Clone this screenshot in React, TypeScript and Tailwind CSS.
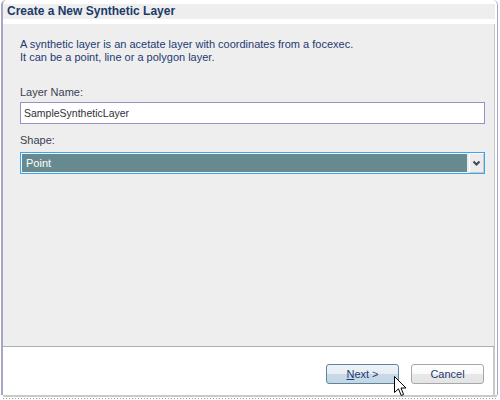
export default function App() {
  return (
    <div className="relative w-[500px] h-[400px] bg-white font-['Liberation_Sans',Arial,sans-serif] text-[11px] leading-[13px] overflow-hidden">
      {/* window frame */}
      <div className="ml-[1px] w-[497px] h-[395px] border-l-2 border-r border-[#a6a6c6] rounded-tl-[5px] rounded-tr-[5px] flex flex-col">
        <div className="h-[4px] shrink-0" />
        {/* title */}
        <div className="h-[15px] shrink-0 mr-[2px] bg-[#eeeeee] pl-[4px] flex items-center">
          <span className="font-bold text-[12px] leading-[15px] text-[#1c3a68]">Create a New Synthetic Layer</span>
        </div>
        <div className="h-[5px] shrink-0" />
        {/* panel */}
        <div className="h-[323px] shrink-0 mr-[2px] bg-[#eeeeee] border-b border-r border-[#c4c8c8] border-b-[#a8b0b0] pl-[17px] pr-[9px] pt-[14px] flex flex-col">
          <p className="text-[#1e3a72]">A synthetic layer is an acetate layer with coordinates from a focexec.</p>
          <p className="text-[#1e3a72]">It can be a point, line or a polygon layer.</p>

          <label className="mt-[22px] text-[#3c4050]">Layer Name:</label>
          <div className="mt-[3px] h-[22px] w-[465px] border border-[#9490c8] bg-white pl-[3px] flex items-center text-[#303038] text-[10.5px]">
            SampleSyntheticLayer
          </div>

          <label className="mt-[10px] text-[#3c4050]">Shape:</label>
          <div className="mt-[5px] h-[22px] w-[465px] border border-[#38a8ea] flex">
            <div className="flex-1 border border-[#f4f8fa] border-r-0 bg-[#678a90] pl-[4px] flex items-center text-white">
              Point
            </div>
            <div className="w-[2px] bg-[#e8ecee]" />
            <div className="w-[15px] bg-[#ececec] border border-[#ffffff] border-r-[#c8c8c8] border-b-[#c8c8c8] flex items-center justify-center">
              <svg width="9" height="7" viewBox="0 0 9 7">
                <path d="M1.5 1.5 L4.5 4.5 L7.5 1.5" fill="none" stroke="#404658" strokeWidth="2" />
              </svg>
            </div>
          </div>
        </div>
        {/* button area */}
        <div className="flex-1 mr-[2px] border-r-2 border-[#c8c8c8] bg-white flex items-start justify-end pr-[9px] pt-[17px] gap-[12px]">
          <button className="w-[73px] h-[20px] rounded-[3px] border border-[#5b8799] bg-[linear-gradient(#eef3f8_0%,#e6edf4_48%,#c9d9e8_52%,#c4d6e6_100%)] text-[#1c3a70] text-[11px] leading-[13px] flex items-center justify-center">
            <span><span className="underline">N</span>ext &gt;</span>
          </button>
          <button className="w-[73px] h-[20px] rounded-[3px] border border-[#a4a8ac] bg-[linear-gradient(#ffffff_0%,#fafafa_48%,#e8e8e8_52%,#e4e4e4_100%)] text-[#1c3a70] text-[11px] leading-[13px] flex items-center justify-center">
            Cancel
          </button>
        </div>
      </div>
      <div className="ml-[3px] w-[494px] h-[2px] bg-[#ccc8c2]" />
      <div className="ml-[3px] mt-[1px] w-[494px] h-[1px] bg-[repeating-linear-gradient(90deg,#7aa8b0_0px,#7aa8b0_1px,transparent_1px,transparent_3px)]" />

      {/* mouse cursor */}
      <svg className="absolute left-[394px] top-[376px]" width="14" height="22" viewBox="0 0 14 22">
        <path d="M0.5 0.5 L0.5 16.5 L4.5 12.8 L7.2 19.5 L9.6 18.5 L7 12 L12 12 Z" fill="#ffffff" stroke="#000000" strokeWidth="1" strokeLinejoin="miter" />
      </svg>
    </div>
  );
}
